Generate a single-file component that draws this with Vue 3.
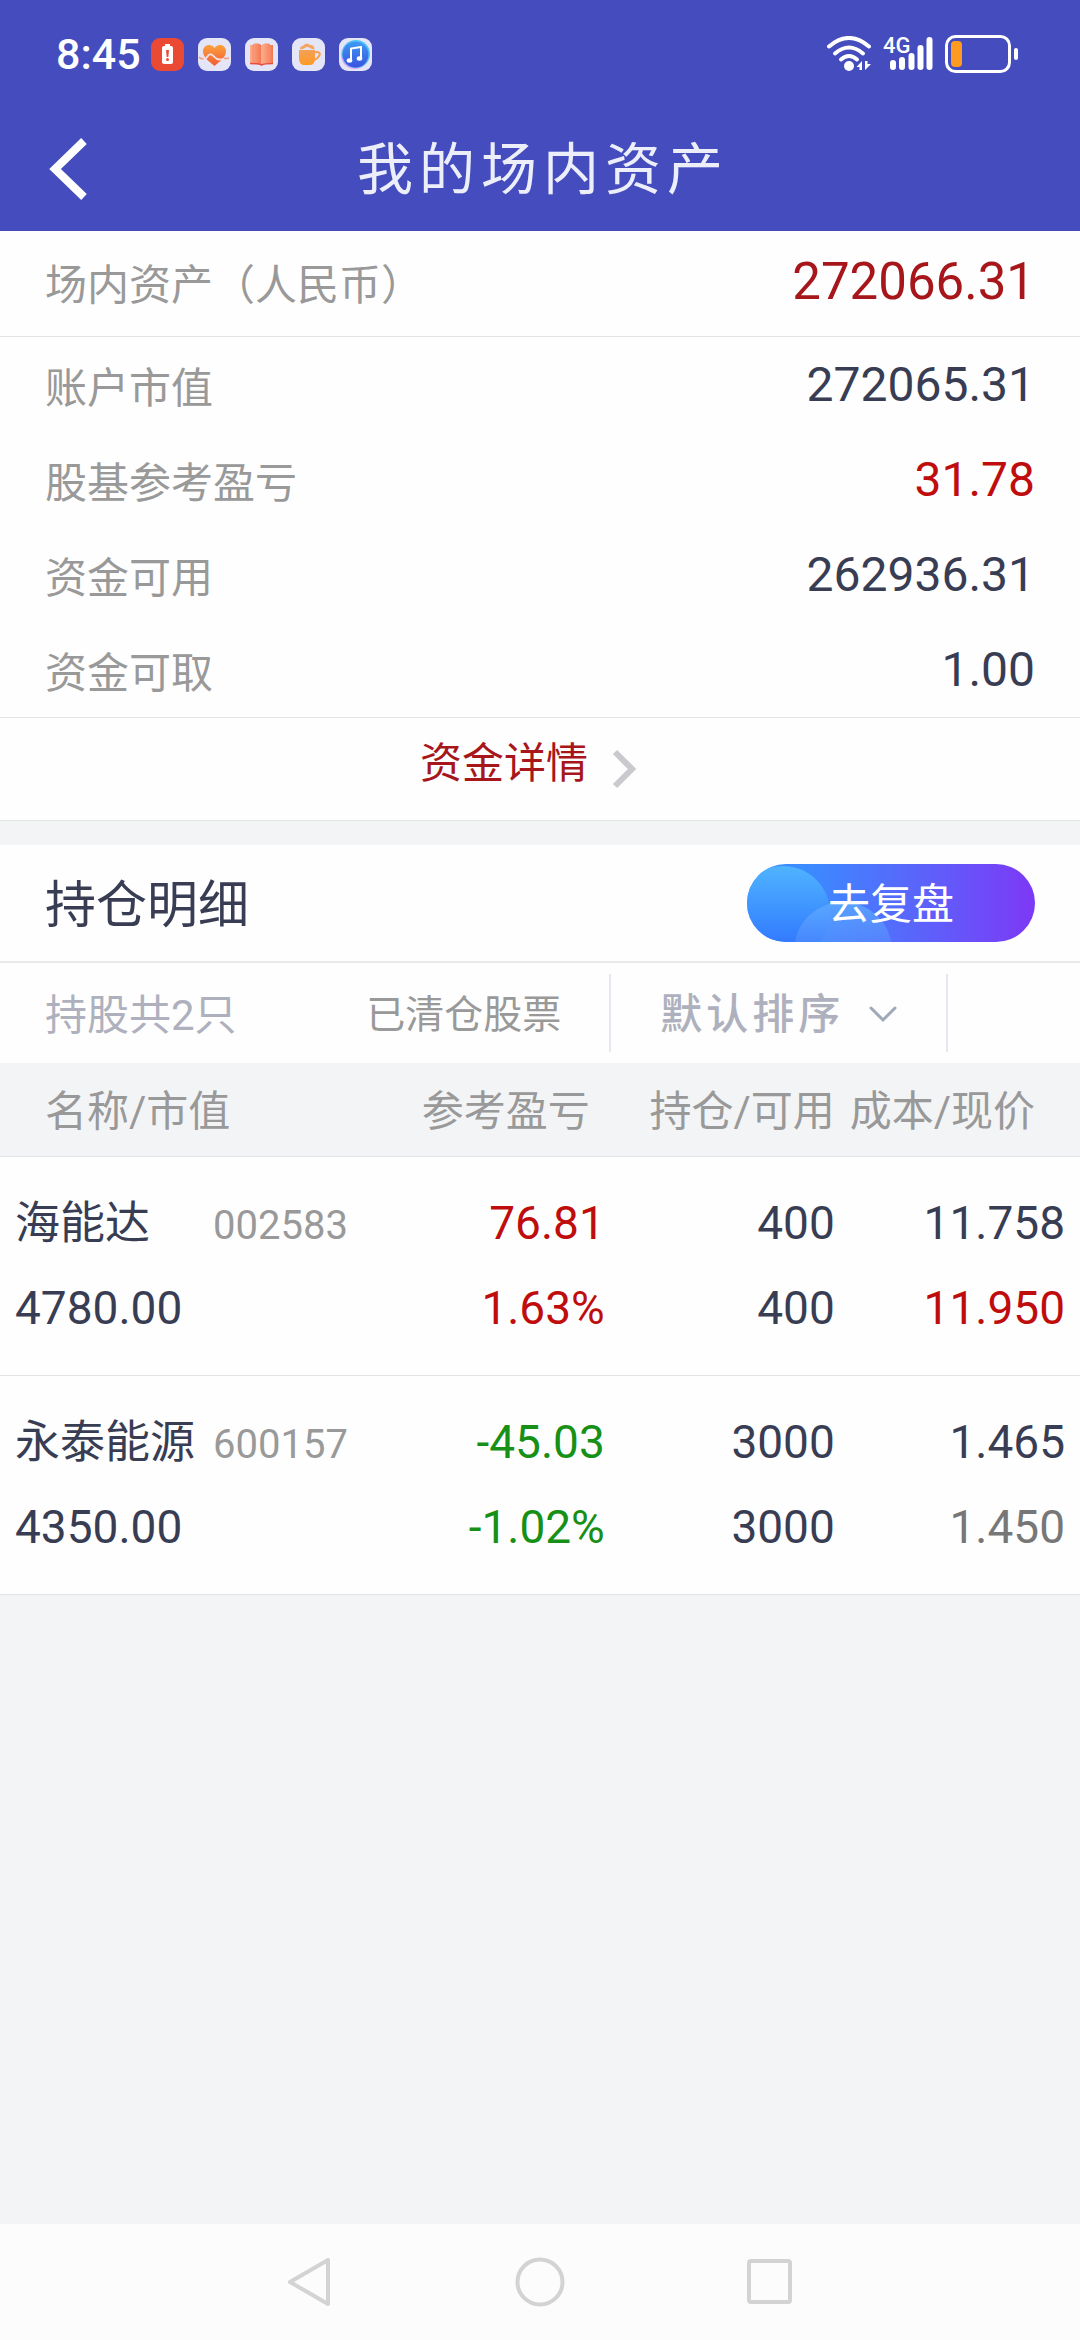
<script setup>
import { ref } from 'vue'

// 资产汇总
const total = ref('272066.31')
const summary = ref([
    { label: '账户市值', value: '272065.31' },
    { label: '股基参考盈亏', value: '31.78', type: 'up' },
    { label: '资金可用', value: '262936.31' },
    { label: '资金可取', value: '1.00' }
])

// 持仓列表
const sortType = ref('default')
const positions = ref([
    {
        name: '海能达', code: '002583', market: '4780.00',
        profit: '76.81', rate: '1.63%', trend: 'up',
        hold: '400', usable: '400',
        cost: '11.758', price: '11.950', priceType: 'up'
    },
    {
        name: '永泰能源', code: '600157', market: '4350.00',
        profit: '-45.03', rate: '-1.02%', trend: 'down',
        hold: '3000', usable: '3000',
        cost: '1.465', price: '1.450', priceType: 'flat'
    }
])
</script>

<template>
    <div class="page">
        <header class="top">
            <div class="status-bar">
                <span class="time">8:45</span>
                <div class="app-icons">
                    <svg viewBox="0 0 33 33">
                        <rect width="33" height="33" rx="9" fill="#ea4a34" />
                        <rect x="14" y="6" width="5" height="3" fill="#fff" />
                        <rect x="11" y="8" width="11" height="18" rx="2" fill="#fff" />
                        <path d="M15 12h3l-.7 7h-1.6z" fill="#ea4a34" />
                        <circle cx="16.5" cy="21.5" r="1.5" fill="#ea4a34" />
                    </svg>
                    <svg viewBox="0 0 33 33">
                        <defs>
                            <linearGradient id="heart" x1="0" y1="0" x2="0" y2="1">
                                <stop offset="0" stop-color="#fba03a" />
                                <stop offset="1" stop-color="#f25a38" />
                            </linearGradient>
                        </defs>
                        <rect width="33" height="33" rx="9" fill="#e4e5f6" />
                        <path d="M16.5 28C11 23.5 5 19 5 13.5 5 9.5 7.8 7 11 7c2.300 0 4.300 1 5.500 3C17.700 8 19.700 7 22 7c3.200 0 6 2.500 6 6.500 0 5.500-6 10-11.500 14.500z" fill="url(#heart)" />
                        <path d="M4 20.500c2 1 4 .5 5.500-2s3.500-3 5.500-1 3.500 4 6.500 4 4-1 7-.8" fill="none" stroke="#f7dfe0" stroke-width="1.800" />
                        <path d="M1 19c1 1.500 2.500 2 4.500 1.500M26 20.600c2-.3 3-.3 5-.3" fill="none" stroke="#f59a78" stroke-width="1.500" />
                    </svg>
                    <svg viewBox="0 0 33 33">
                        <defs>
                            <linearGradient id="book" x1="0" y1="0" x2="1" y2="0">
                                <stop offset="0" stop-color="#fcae8e" />
                                <stop offset="1" stop-color="#f4764f" />
                            </linearGradient>
                        </defs>
                        <rect width="33" height="33" rx="9" fill="#e4e5f6" />
                        <path d="M5 7h3v-1c4-1 7-.5 8.500 1.500V27C14 25.500 10 25.500 5 26z" fill="url(#book)" />
                        <path d="M28 7h-3v-1c-4-1-7-.5-8.500 1.500V27c2.500-1.500 6.500-1.500 11.500-1z" fill="url(#book)" />
                        <path d="M8 7v17M25 7v17" stroke="#f58d6b" />
                        <path d="M5 25.500c5 0 9 0 11.500 1.500 2.500-1.500 6.500-1.500 11.500-1.500" fill="none" stroke="#e84c42" stroke-width="1.500" />
                    </svg>
                    <svg viewBox="0 0 33 33">
                        <defs>
                            <linearGradient id="cup" x1="0" y1="0" x2="0" y2="1">
                                <stop offset="0" stop-color="#f3a058" />
                                <stop offset="1" stop-color="#ff9a22" />
                            </linearGradient>
                        </defs>
                        <rect width="33" height="33" rx="9" fill="#e4e5f6" />
                        <path d="M22 14.500c5-1.500 7 1 5 3.500-1 2-3 3.500-5 4" fill="none" stroke="#f6a04a" stroke-width="2" />
                        <path d="M7 12h16v8c0 4.500-2 7-5 7h-6c-3 0-5-2.500-5-7z" fill="url(#cup)" />
                        <path d="M8 11c0-3 3-3 4-4 2-2 5-1 6 0 3-.5 4.500 1.500 4.500 4-4 1-5-2-7-2s-3.500 3-7.500 2z" fill="#f5a664" />
                    </svg>
                    <svg viewBox="0 0 33 33">
                        <defs>
                            <linearGradient id="music" x1="0" y1="0" x2="0" y2="1">
                                <stop offset="0" stop-color="#3d9bf2" />
                                <stop offset="1" stop-color="#3a52e0" />
                            </linearGradient>
                        </defs>
                        <rect width="33" height="33" rx="9" fill="#e4e5f6" />
                        <circle cx="16" cy="17" r="14" fill="#d9a4f2" />
                        <circle cx="17" cy="16" r="14" fill="#52c4fa" />
                        <circle cx="16.5" cy="16.5" r="13" fill="url(#music)" />
                        <path d="M12 22V10.500L22 9v11" fill="none" stroke="#fff" stroke-width="2" />
                        <ellipse cx="10.5" cy="22.5" rx="2.800" ry="2.200" fill="#fff" />
                        <ellipse cx="20.5" cy="20.5" rx="2.800" ry="2.200" fill="#fff" />
                    </svg>
                </div>
                <div class="system-icons">
                    <svg class="wifi" viewBox="0 0 44 36">
                        <g fill="none" stroke="#fff" stroke-width="4" stroke-linecap="round">
                            <path d="M2 10.500Q22-6.500 42 10.500" />
                            <path d="M8 17.500Q22 5.500 36 17.500" />
                            <path d="M14 23.500Q22 16.500 30 23.500" />
                        </g>
                        <circle cx="22" cy="30" r="5" fill="#fff" />
                        <path d="M35 25v9h-2.500v-3H29.500zM38 25v9l6-6h-3.500v-3z" fill="#fff" />
                    </svg>
                    <svg class="signal" viewBox="0 0 50 36">
                        <text x="0" y="17" class="net">4G</text>
                        <g stroke="#fff" stroke-width="6" stroke-linecap="round">
                            <path d="M10 27v4M19 24v7M28.500 20v11M37.500 12v19M46.500 4v27" />
                        </g>
                    </svg>
                    <svg class="battery" viewBox="0 0 74 38">
                        <rect x="1.5" y="1.5" width="63" height="35" rx="9" fill="none" stroke="#fff" stroke-width="3" />
                        <rect x="6" y="6" width="11" height="26" rx="4" fill="#ff9c1f" />
                        <rect x="69" y="13" width="4" height="12" rx="2" fill="#fff" />
                    </svg>
                </div>
            </div>
            <div class="nav-bar">
                <button class="back-btn" aria-label="返回">
                    <svg viewBox="0 0 40 64">
                        <path d="M36 3L7 31l29 28" fill="none" stroke="#fff" stroke-width="8" />
                    </svg>
                </button>
                <h1 class="title">我的场内资产</h1>
            </div>
        </header>

        <section class="assets">
            <div class="row total-row">
                <span class="label">场内资产（人民币）</span>
                <span class="total">{{ total }}</span>
            </div>
            <div class="summary">
                <div v-for="item in summary" :key="item.label" class="row">
                    <span class="label">{{ item.label }}</span>
                    <span class="value" :class="item.type">{{ item.value }}</span>
                </div>
            </div>
            <a class="detail-link" href="#">
                <span class="detail-text">资金详情</span>
                <svg viewBox="0 0 24 40">
                    <path d="M3 3l17 17L3 37" fill="none" stroke="#c9c9ce" stroke-width="6" />
                </svg>
            </a>
        </section>

        <section class="holdings">
            <div class="holdings-header">
                <h2 class="holdings-title">持仓明细</h2>
                <button class="review-btn">
                    <svg viewBox="0 0 288 78">
                        <defs>
                            <linearGradient id="big" x1="0" y1="0" x2="0" y2="1">
                                <stop offset="0" stop-color="#4fb4ff" />
                                <stop offset="1" stop-color="#2c6dff" />
                            </linearGradient>
                            <linearGradient id="small" x1="0" y1="0" x2="0" y2="1">
                                <stop offset="0" stop-color="#5cabff" stop-opacity="0.8" />
                                <stop offset="0.5" stop-color="#5c90ff" stop-opacity="0.4" />
                            </linearGradient>
                        </defs>
                        <circle cx="36" cy="49" r="47" fill="url(#big)" />
                        <circle cx="96" cy="87" r="49" fill="url(#small)" />
                    </svg>
                    <span>去复盘</span>
                </button>
            </div>

            <div class="filter-bar">
                <div class="filter-left">
                    <span class="count">持股共2只</span>
                    <a class="cleared" href="#">已清仓股票</a>
                </div>
                <label class="sort">
                    <select v-model="sortType" aria-label="排序">
                        <option value="default">默认排序</option>
                    </select>
                    <svg viewBox="0 0 28 18">
                        <path d="M2 3l12 12L26 3" fill="none" stroke="#9fa9b9" stroke-width="3" stroke-linecap="round" />
                    </svg>
                </label>
            </div>

            <table class="table">
                <thead>
                    <tr>
                        <th class="col-name">名称/市值</th>
                        <th class="col-profit">参考盈亏</th>
                        <th class="col-hold">持仓/可用</th>
                        <th class="col-price">成本/现价</th>
                    </tr>
                </thead>
                <tbody>
                    <tr v-for="item in positions" :key="item.code">
                        <td>
                            <div class="line">
                                <span class="name">{{ item.name }}</span>
                                <span class="code">{{ item.code }}</span>
                            </div>
                            <div class="line">{{ item.market }}</div>
                        </td>
                        <td :class="item.trend">
                            <div class="line">{{ item.profit }}</div>
                            <div class="line">{{ item.rate }}</div>
                        </td>
                        <td>
                            <div class="line">{{ item.hold }}</div>
                            <div class="line">{{ item.usable }}</div>
                        </td>
                        <td>
                            <div class="line">{{ item.cost }}</div>
                            <div class="line" :class="item.priceType">{{ item.price }}</div>
                        </td>
                    </tr>
                </tbody>
            </table>
        </section>

        <nav class="system-nav">
            <button aria-label="后退">
                <svg viewBox="0 0 50 50">
                    <path d="M43 3v44L5 25z" fill="none" stroke="#d3d3d3" stroke-width="4" stroke-linejoin="round" />
                </svg>
            </button>
            <button aria-label="主页">
                <svg viewBox="0 0 50 50">
                    <circle cx="25" cy="25" r="22.5" fill="none" stroke="#d3d3d3" stroke-width="4" />
                </svg>
            </button>
            <button aria-label="最近任务">
                <svg viewBox="0 0 50 50">
                    <rect x="4" y="4" width="41" height="41" rx="2" fill="none" stroke="#d3d3d3" stroke-width="4" />
                </svg>
            </button>
        </nav>
    </div>
</template>

<style>
body {
    margin: 0;
    background: #f3f4f6;
}
</style>

<style scoped>
.page {
    min-height: 100vh;
    display: flex;
    flex-direction: column;
    background: #f3f4f6;
    color: #383d54;
    font-family: Roboto, "Noto Sans CJK SC", sans-serif;
    font-size: 42px;
}

svg {
    display: block;
}

button {
    padding: 0;
    border: none;
    background: none;
    font-family: inherit;
    cursor: pointer;
}

a {
    text-decoration: none;
}

/* 顶部 */
.top {
    background: #444cbe;
    color: #fff;
}

.status-bar {
    height: 108px;
    padding: 0 61px 0 56px;
    display: flex;
    align-items: center;
}

.time {
    font-size: 43px;
    font-weight: 500;
}

.app-icons {
    display: flex;
    gap: 14px;
    margin-left: 10px;
}

.app-icons svg {
    width: 33px;
    height: 33px;
}

.system-icons {
    display: flex;
    align-items: center;
    gap: 12px;
    margin-left: auto;
}

.wifi {
    width: 44px;
    height: 36px;
}

.signal {
    width: 50px;
    height: 36px;
    overflow: visible;
}

.net {
    fill: #fff;
    font-size: 22px;
    font-weight: 500;
}

.battery {
    width: 74px;
    height: 38px;
}

.nav-bar {
    height: 123px;
    padding: 0 48px;
    display: grid;
    grid-template-columns: 1fr auto 1fr;
    align-items: center;
}

.back-btn svg {
    width: 40px;
    height: 64px;
}

.title {
    margin: 0;
    padding-left: 6px;
    color: #eceefa;
    font-size: 56px;
    font-weight: 400;
    letter-spacing: 6px;
    line-height: 80px;
}

/* 资产 */
.assets {
    background: #fefefe;
    border-bottom: 1px solid #e2e3e3;
}

.row {
    height: 95px;
    padding: 0 45px;
    display: flex;
    align-items: center;
    justify-content: space-between;
}

.total-row {
    height: 101px;
    padding-bottom: 4px;
    border-bottom: 1px solid #e2e3e3;
}

.summary {
    border-bottom: 1px solid #e2e3e3;
}

.label {
    color: #999;
}

.total {
    color: #a6161a;
    font-size: 51px;
}

.value {
    font-size: 48px;
}

.up {
    color: #bf0d0d;
}

.down {
    color: #169016;
}

.flat {
    color: #777;
}

.detail-link {
    height: 102px;
    padding-right: 24px;
    display: flex;
    align-items: center;
    justify-content: center;
    gap: 24px;
    color: #a6161a;
}

.detail-text {
    padding-bottom: 20px;
}

.detail-link svg {
    width: 24px;
    height: 40px;
}

/* 持仓 */
.holdings {
    margin-top: 24px;
    background: #fefefe;
}

.holdings-header {
    height: 116px;
    padding: 0 45px;
    display: flex;
    align-items: center;
    justify-content: space-between;
    border-bottom: 2px solid #e8eaec;
}

.holdings-title {
    margin: 0;
    padding-bottom: 4px;
    font-size: 51px;
    font-weight: 400;
}

.review-btn {
    position: relative;
    width: 288px;
    height: 78px;
    padding-bottom: 6px;
    overflow: hidden;
    border-radius: 39px;
    background: linear-gradient(90deg, #3a8cff 20%, #5b63fb 60%, #7d38f6);
    color: #fff;
    font-size: 42px;
}

.review-btn svg {
    position: absolute;
    inset: 0;
}

.review-btn span {
    position: relative;
}

.filter-bar {
    height: 100px;
    display: flex;
    align-items: center;
}

.filter-left,
.sort {
    box-sizing: border-box;
    height: 78px;
    padding-bottom: 2px;
    display: flex;
    align-items: center;
    border-right: 2px solid #e6e8ef;
    color: #aeb1bd;
}

.filter-left {
    width: 56.6%;
    padding: 0 48px 4px 45px;
    justify-content: space-between;
}

.cleared {
    color: #999;
    font-size: 39px;
}

.sort {
    width: 31.2%;
    padding: 2px 0 0 49px;
    gap: 24px;
}

.sort select {
    appearance: none;
    padding: 0;
    border: none;
    outline: none;
    background: none;
    color: inherit;
    font-family: inherit;
    font-size: 42px;
    font-weight: 500;
    letter-spacing: 4px;
}

.sort svg {
    width: 28px;
    height: 18px;
}

/* 表格 */
.table {
    width: 100%;
    table-layout: fixed;
    border-collapse: collapse;
}

.table th {
    box-sizing: border-box;
    height: 93px;
    padding: 0 0 4px;
    background: #f3f4f6;
    color: #999;
    font-weight: 400;
    text-align: right;
    white-space: nowrap;
}

.table tr {
    border-bottom: 1px solid #e2e3e3;
}

.table .col-name {
    width: 32%;
    padding-left: 45px;
    text-align: left;
}

.table .col-profit {
    width: 24%;
    padding-right: 15px;
}

.table .col-hold {
    width: 21.3%;
}

.table .col-price {
    padding-right: 45px;
}

.table td {
    padding: 24px 0;
    font-size: 46px;
    text-align: right;
    white-space: nowrap;
}

.table td:first-child {
    padding-left: 15px;
    text-align: left;
}

.table td:last-child {
    padding-right: 15px;
}

.line {
    display: flex;
    align-items: baseline;
    justify-content: flex-end;
    height: 85px;
    line-height: 85px;
}

td:first-child .line {
    justify-content: flex-start;
}

.name {
    min-width: 180px;
    margin-right: 18px;
    font-size: 45px;
}

.code {
    color: #999;
    font-size: 40px;
}

/* 底部导航 */
.system-nav {
    height: 116px;
    margin-top: auto;
    padding: 0 18%;
    display: flex;
    align-items: center;
    background: #fcfcfc;
}

.system-nav button {
    flex: 1;
    display: flex;
    justify-content: center;
}

.system-nav svg {
    width: 50px;
    height: 50px;
}
</style>
